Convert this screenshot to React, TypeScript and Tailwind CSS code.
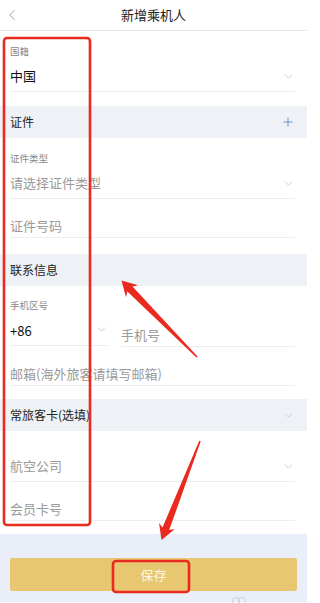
import { ChevronLeft, ChevronDown, Plus } from "lucide-react";

const font = { fontFamily: '"Noto Sans CJK SC", "Noto Sans", sans-serif' };

function Chevron() {
  return <ChevronDown className="h-[13px] w-[13px] text-[#c4c4c4]" strokeWidth={1.5} />;
}

function Band({ title, right }: { title: string; right?: React.ReactNode }) {
  return (
    <div className="flex h-[32px] items-center justify-between bg-[#eef1f5] pl-[10px] pr-[12px]">
      <span className="text-[12px] text-[#222]">{title}</span>
      {right}
    </div>
  );
}

function Field({ text, dark, chevron, h, pt }: { text: string; dark?: boolean; chevron?: boolean; h: string; pt: string }) {
  return (
    <div className={`flex ${h} ${pt} items-start justify-between border-b border-[#eeeeee]`}>
      <span className={`text-[13px] leading-[18px] ${dark ? "text-[#111]" : "text-[#9a9a9a]"}`}>{text}</span>
      {chevron && <span className="mt-[3px]"><Chevron /></span>}
    </div>
  );
}

// red annotation arrow, tip at `tip`, shaft tapering back to `tail`
function Arrow({ tip, tail }: { tip: [number, number]; tail: [number, number] }) {
  const dx = tip[0] - tail[0];
  const dy = tip[1] - tail[1];
  const len = Math.hypot(dx, dy);
  const angle = (Math.atan2(dy, dx) * 180) / Math.PI;
  const pts = `0,0 -15,-8.5 -12,-3.6 ${-len},-0.8 ${-len},0.8 -12,3.6 -15,8.5`;
  return (
    <g transform={`translate(${tip[0]} ${tip[1]}) rotate(${angle})`}>
      <polygon points={pts} fill="#ea2a1f" />
    </g>
  );
}

export default function App() {
  return (
    <div className="relative h-[603px] w-[307px] overflow-hidden bg-white" style={font}>
      <div className="relative flex h-[31px] items-center justify-center border-b border-[#e8e8e8]">
        <ChevronLeft className="absolute left-[3px] top-[6px] h-[18px] w-[18px] text-[#9a9a9a]" strokeWidth={1.3} />
        <span className="text-[13px] text-[#222]">新增乘机人</span>
      </div>

      <div className="pl-[10px] pr-[12px]">
        <div className="pt-[14px] text-[9.5px] leading-[12px] text-[#888]">国籍</div>
        <Field text="中国" dark chevron h="h-[35px]" pt="pt-[10px]" />
        <div className="h-[14px]" />
      </div>

      <Band title="证件" right={<Plus className="h-[14px] w-[14px] text-[#4a7fbf]" strokeWidth={1.4} />} />

      <div className="pl-[10px] pr-[12px]">
        <div className="pt-[14px] text-[9.5px] leading-[12px] text-[#888]">证件类型</div>
        <Field text="请选择证件类型" chevron h="h-[35px]" pt="pt-[10px]" />
        <Field text="证件号码" h="h-[39px]" pt="pt-[18px]" />
        <div className="h-[16px]" />
      </div>

      <Band title="联系信息" />

      <div className="pl-[10px] pr-[12px]">
        <div className="pt-[13px] text-[9.5px] leading-[12px] text-[#888]">手机区号</div>
        <div className="flex h-[36px] items-start">
          <div className="flex h-[35px] w-[98px] items-start justify-between border-b border-[#eeeeee] pt-[11px]">
            <span className="text-[13px] leading-[18px] text-[#111]">+86</span>
            <span className="mt-[1px]"><Chevron /></span>
          </div>
          <div className="ml-[13px] flex h-[36px] flex-1 items-start border-b border-[#eeeeee] pt-[15px]">
            <span className="text-[13px] leading-[18px] text-[#9a9a9a]">手机号</span>
          </div>
        </div>
        <Field text="邮箱(海外旅客请填写邮箱)" h="h-[39px]" pt="pt-[18px]" />
        <div className="h-[13px]" />
      </div>

      <Band title="常旅客卡(选填)" right={<Chevron />} />

      <div className="pl-[10px] pr-[12px]">
        <Field text="航空公司" chevron h="h-[51px]" pt="pt-[26px]" />
        <Field text="会员卡号" h="h-[39px]" pt="pt-[18px]" />
        <div className="h-[13px]" />
      </div>

      <div className="h-[68px] bg-[#e9eef8] px-[10px] pt-[24px]">
        <div className="flex h-[33px] items-center justify-center rounded-[2px] bg-[#e8c771]">
          <span className="text-[13px] text-[#fdf6e3]">保存</span>
        </div>
      </div>

      <svg className="pointer-events-none absolute inset-0" width="307" height="603" viewBox="0 0 307 603">
        <rect x="4" y="38" width="86" height="487" rx="3" fill="none" stroke="#ea2a1f" strokeWidth="2.6" />
        <rect x="113" y="561" width="76" height="31" rx="3" fill="none" stroke="#ea2a1f" strokeWidth="2.6" />
        <Arrow tip={[121.5, 280.5]} tail={[197, 357]} />
        <Arrow tip={[161.5, 540]} tail={[200, 441]} />
        <circle cx="236" cy="601" r="3.5" fill="none" stroke="#cfcfcf" strokeWidth="1" />
        <circle cx="242" cy="601" r="3.5" fill="none" stroke="#cfcfcf" strokeWidth="1" />
      </svg>
    </div>
  );
}
